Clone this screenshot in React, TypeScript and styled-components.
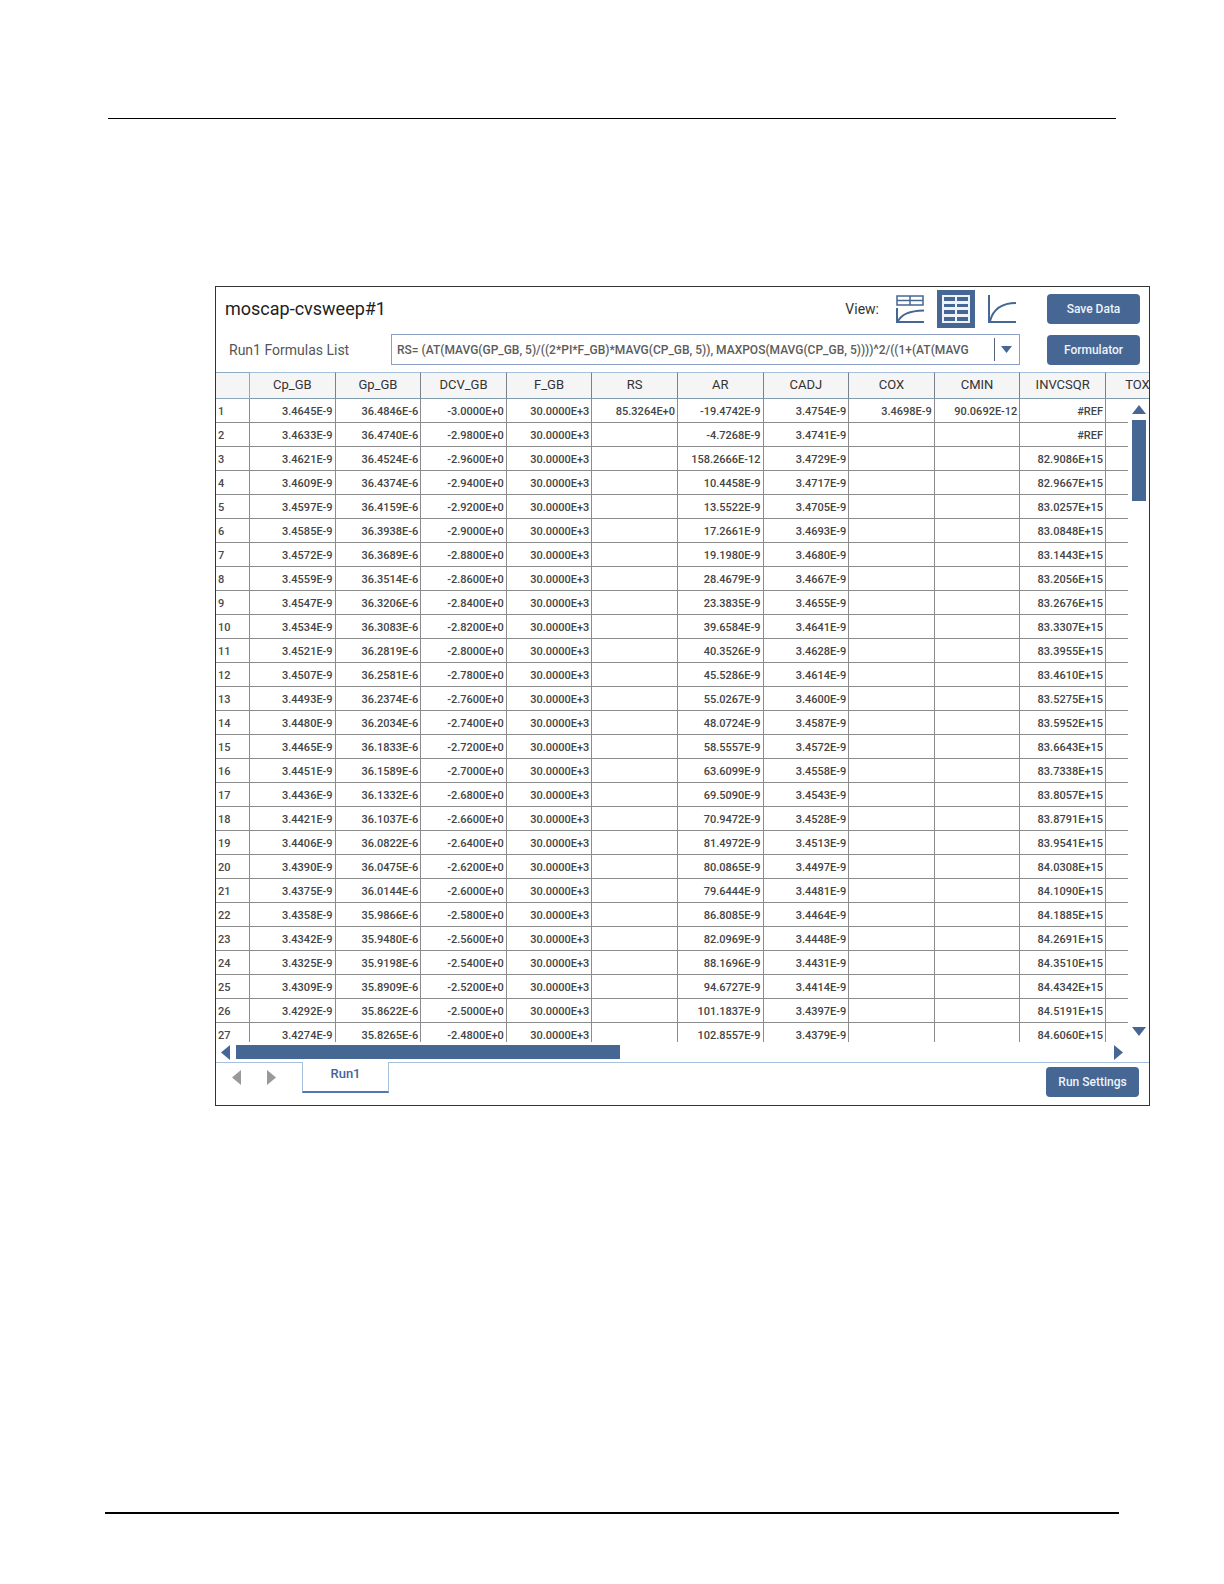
import React from "react";
import styled, { createGlobalStyle } from "styled-components";

const blue = "#466794";
const lineBlue = "#a4c0dc";

const GlobalStyle = createGlobalStyle`
  * { box-sizing: border-box; }
  body {
    margin: 0;
    background: #fff;
    color: #3a3a3a;
    font-family: Roboto, "Liberation Sans", sans-serif;
  }
  button, select { font-family: inherit; }
`;

const Page = styled.div`
  display: flex;
  flex-direction: column;
  min-height: 100vh;
  padding: 118px 105px 70px;
`;

const TopRule = styled.hr`
  width: calc(100% - 6px);
  height: 1px;
  margin: 0 auto;
  border: 0;
  background: #000;
`;

const BottomRule = styled.hr`
  width: 100%;
  height: 2px;
  margin: auto 0 0;
  border: 0;
  background: #000;
`;

const Panel = styled.main`
  margin: 167px -31px 0 110px;
  border: 1px solid #333;
  background: #fff;
`;

const Toolbar = styled.header`
  display: flex;
  align-items: center;
  height: 44px;
  padding: 0 9px;
`;

const Title = styled.h1`
  flex: 1;
  margin: 0;
  font-size: 18px;
  font-weight: 400;
  line-height: 24px;
  color: #222;
`;

const ViewLabel = styled.span`
  margin-right: 10px;
  font-size: 14px;
  line-height: 20px;
  color: #333;
`;

const ViewGroup = styled.div`
  display: flex;
  gap: 4px;
  margin-right: 24px;
`;

const ViewButton = styled.button<{ $active?: boolean }>`
  display: grid;
  place-items: center;
  width: 42px;
  height: 38px;
  padding: 0;
  border: 2px solid #fff;
  border-width: 0 2px;
  background: ${(p) => (p.$active ? blue : "#fff")};
`;

const ActionButton = styled.button`
  flex: none;
  width: 93px;
  height: 30px;
  padding: 0;
  border: 0;
  border-radius: 4px;
  background: ${blue};
  color: #eef3fa;
  font-size: 12px;
  font-weight: 500;
  line-height: 16px;
`;

const FormulaRow = styled.div`
  display: flex;
  align-items: center;
  padding: 3px 9px 7px 13px;
`;

const FormulaLabel = styled.label`
  width: 162px;
  font-size: 14px;
  line-height: 20px;
  color: #555;
`;

const SelectBox = styled.div`
  display: grid;
  flex: 1;
  align-items: center;
  margin-right: 27px;
  min-width: 0;
`;

const FormulaSelect = styled.select`
  grid-area: 1 / 1;
  width: 100%;
  height: 31px;
  padding: 0 28px 0 5px;
  appearance: none;
  border: 1px solid #8b9fc4;
  border-radius: 0;
  background: #fff;
  color: #5c5c5c;
  font-size: 12px;
  font-weight: 500;
`;

const SelectMark = styled.svg`
  grid-area: 1 / 1;
  justify-self: end;
  pointer-events: none;
`;

const Viewport = styled.div`
  position: relative;
  max-height: 670px;
  overflow: hidden;
`;

const DataTable = styled.table`
  width: calc(100% + 20px);
  table-layout: fixed;
  border-collapse: separate;
  border-spacing: 0;
`;

const CornerCell = styled.th`
  width: 34px;
  height: 27px;
  padding: 0;
  border: solid #8da9bd;
  border-width: 1px 1px 1px 0;
  background: #f5f5f5;
`;

const HeadCell = styled.th`
  height: 27px;
  padding: 0 0 2px;
  border-top: 1px solid ${lineBlue};
  border-right: 1px solid #78828c;
  border-bottom: 1px solid #7f9dad;
  background: #f5f5f5;
  color: #333;
  font-size: 13px;
  font-weight: 400;
  line-height: 16px;

  &:last-child {
    width: 63px;
    border-right: 0;
  }
`;

const RowHead = styled.th`
  height: 24px;
  padding: 2px 0 0 2px;
  border-right: 1px solid #8c8c8c;
  border-bottom: 1px solid #8c8c8c;
  color: #4a4a4a;
  font-size: 11px;
  font-weight: 500;
  line-height: 16px;
  text-align: left;
`;

const Cell = styled.td`
  height: 24px;
  padding: 2px 2px 0 0;
  border-right: 1px solid #8c8c8c;
  border-bottom: 1px solid #8c8c8c;
  color: #444;
  font-size: 11px;
  font-weight: 500;
  line-height: 16px;
  text-align: right;
  white-space: nowrap;
`;

const VerticalBar = styled.div`
  position: absolute;
  top: 27px;
  right: 0;
  bottom: 0;
  display: flex;
  flex-direction: column;
  align-items: center;
  width: 21px;
  padding: 6px 0;
  background: #fff;
`;

const VerticalThumb = styled.div`
  width: 14px;
  height: 81px;
  margin: 6px 0 auto;
  background: ${blue};
`;

const ArrowButton = styled.button`
  display: block;
  flex: none;
  padding: 0;
  border: 0;
  background: none;
  line-height: 0;
`;

const HorizontalBar = styled.div`
  display: flex;
  align-items: center;
  height: 20px;
  padding: 0 26px 0 5px;
`;

const HorizontalTrack = styled.div`
  flex: 1;
  margin: 0 6px;
`;

const HorizontalThumb = styled.div`
  width: 44%;
  height: 14px;
  background: ${blue};
`;

const Footer = styled.footer`
  display: flex;
  align-items: flex-start;
  height: 43px;
`;

const FooterLead = styled.div`
  display: flex;
  align-items: flex-start;
  gap: 26px;
  width: 86px;
  height: 100%;
  padding: 7px 0 0 16px;
  border-top: 1px solid ${lineBlue};
`;

const Tab = styled.button`
  width: 87px;
  height: 31px;
  padding: 0 0 6px;
  border: solid ${lineBlue};
  border-width: 0 1px 2px;
  border-bottom-color: #5478ae;
  background: #fff;
  color: #44649a;
  font-size: 13px;
  font-weight: 500;
  line-height: 16px;
`;

const FooterRest = styled.div`
  display: flex;
  flex: 1;
  justify-content: flex-end;
  height: 100%;
  padding: 4px 10px 0 0;
  border-top: 1px solid ${lineBlue};
`;

const columns = ["Cp_GB", "Gp_GB", "DCV_GB", "F_GB", "RS", "AR", "CADJ", "COX", "CMIN", "INVCSQR", "TOX"];

const readings = `
3.4645E-9 36.4846E-6 -3.0000E+0 -19.4742E-9 3.4754E-9 #REF
3.4633E-9 36.4740E-6 -2.9800E+0 -4.7268E-9 3.4741E-9 #REF
3.4621E-9 36.4524E-6 -2.9600E+0 158.2666E-12 3.4729E-9 82.9086E+15
3.4609E-9 36.4374E-6 -2.9400E+0 10.4458E-9 3.4717E-9 82.9667E+15
3.4597E-9 36.4159E-6 -2.9200E+0 13.5522E-9 3.4705E-9 83.0257E+15
3.4585E-9 36.3938E-6 -2.9000E+0 17.2661E-9 3.4693E-9 83.0848E+15
3.4572E-9 36.3689E-6 -2.8800E+0 19.1980E-9 3.4680E-9 83.1443E+15
3.4559E-9 36.3514E-6 -2.8600E+0 28.4679E-9 3.4667E-9 83.2056E+15
3.4547E-9 36.3206E-6 -2.8400E+0 23.3835E-9 3.4655E-9 83.2676E+15
3.4534E-9 36.3083E-6 -2.8200E+0 39.6584E-9 3.4641E-9 83.3307E+15
3.4521E-9 36.2819E-6 -2.8000E+0 40.3526E-9 3.4628E-9 83.3955E+15
3.4507E-9 36.2581E-6 -2.7800E+0 45.5286E-9 3.4614E-9 83.4610E+15
3.4493E-9 36.2374E-6 -2.7600E+0 55.0267E-9 3.4600E-9 83.5275E+15
3.4480E-9 36.2034E-6 -2.7400E+0 48.0724E-9 3.4587E-9 83.5952E+15
3.4465E-9 36.1833E-6 -2.7200E+0 58.5557E-9 3.4572E-9 83.6643E+15
3.4451E-9 36.1589E-6 -2.7000E+0 63.6099E-9 3.4558E-9 83.7338E+15
3.4436E-9 36.1332E-6 -2.6800E+0 69.5090E-9 3.4543E-9 83.8057E+15
3.4421E-9 36.1037E-6 -2.6600E+0 70.9472E-9 3.4528E-9 83.8791E+15
3.4406E-9 36.0822E-6 -2.6400E+0 81.4972E-9 3.4513E-9 83.9541E+15
3.4390E-9 36.0475E-6 -2.6200E+0 80.0865E-9 3.4497E-9 84.0308E+15
3.4375E-9 36.0144E-6 -2.6000E+0 79.6444E-9 3.4481E-9 84.1090E+15
3.4358E-9 35.9866E-6 -2.5800E+0 86.8085E-9 3.4464E-9 84.1885E+15
3.4342E-9 35.9480E-6 -2.5600E+0 82.0969E-9 3.4448E-9 84.2691E+15
3.4325E-9 35.9198E-6 -2.5400E+0 88.1696E-9 3.4431E-9 84.3510E+15
3.4309E-9 35.8909E-6 -2.5200E+0 94.6727E-9 3.4414E-9 84.4342E+15
3.4292E-9 35.8622E-6 -2.5000E+0 101.1837E-9 3.4397E-9 84.5191E+15
3.4274E-9 35.8265E-6 -2.4800E+0 102.8557E-9 3.4379E-9 84.6060E+15
`;

const rows = readings
  .trim()
  .split("\n")
  .map((line, i) => {
    const [cp, gp, dcv, ar, cadj, inv] = line.split(" ");
    const first = i === 0;
    return [
      cp,
      gp,
      dcv,
      "30.0000E+3",
      first ? "85.3264E+0" : "",
      ar,
      cadj,
      first ? "3.4698E-9" : "",
      first ? "90.0692E-12" : "",
      inv,
      "",
    ];
  });

const arrowShapes = {
  up: { w: 14, h: 9, d: "M7 0L14 9H0Z" },
  down: { w: 14, h: 9, d: "M0 0H14L7 9Z" },
  left: { w: 9, h: 15, d: "M9 0V15L0 7.5Z" },
  right: { w: 9, h: 15, d: "M0 0V15L9 7.5Z" },
};

function Arrow({ dir, label, color = blue }: { dir: keyof typeof arrowShapes; label: string; color?: string }) {
  const { w, h, d } = arrowShapes[dir];
  return (
    <ArrowButton type="button" aria-label={label}>
      <svg width={w} height={h} viewBox={`0 0 ${w} ${h}`}>
        <path d={d} fill={color} />
      </svg>
    </ArrowButton>
  );
}

function SplitIcon() {
  return (
    <svg width="28" height="28" viewBox="0 0 28 28" fill="none" stroke={blue}>
      <path d="M1 1H27V10H1ZM1 5.5H27M14 1V10" strokeWidth="1.5" />
      <path d="M1 13V27H28" strokeWidth="2" />
      <path d="M2 26C6 19 13 16 28 15.5" strokeWidth="2" />
    </svg>
  );
}

function TableIcon() {
  return (
    <svg width="28" height="28" viewBox="0 0 28 28">
      <path d="M0 0H28V28H0Z" fill="#eef3fa" />
      <path
        d="M2 2H13V6H2ZM15 2H26V6H15ZM2 9H13V12H2ZM15 9H26V12H15ZM2 15H13V19H2ZM15 15H26V19H15ZM2 22H13V26H2ZM15 22H26V26H15Z"
        fill={blue}
      />
    </svg>
  );
}

function GraphIcon() {
  return (
    <svg width="28" height="28" viewBox="0 0 28 28" fill="none" stroke={blue} strokeWidth="2">
      <path d="M1 0V27H28" />
      <path d="M2 26C5 15 13 8 28 8" />
    </svg>
  );
}

export default function App() {
  return (
    <>
      <GlobalStyle />
      <Page>
        <TopRule />
        <Panel>
          <Toolbar>
            <Title>moscap-cvsweep#1</Title>
            <ViewLabel>View:</ViewLabel>
            <ViewGroup>
              <ViewButton type="button" aria-label="Table and graph">
                <SplitIcon />
              </ViewButton>
              <ViewButton type="button" aria-label="Table" $active>
                <TableIcon />
              </ViewButton>
              <ViewButton type="button" aria-label="Graph">
                <GraphIcon />
              </ViewButton>
            </ViewGroup>
            <ActionButton type="button">Save Data</ActionButton>
          </Toolbar>
          <FormulaRow>
            <FormulaLabel htmlFor="formula">Run1 Formulas List</FormulaLabel>
            <SelectBox>
              <FormulaSelect id="formula">
                <option>RS= (AT(MAVG(GP_GB, 5)/((2*PI*F_GB)*MAVG(CP_GB, 5)), MAXPOS(MAVG(CP_GB, 5))))^2/((1+(AT(MAVG</option>
              </FormulaSelect>
              <SelectMark width="27" height="23" viewBox="0 0 27 23">
                <path d="M1.5 0V23" stroke="#56627c" />
                <path d="M8 8H19L13.5 15Z" fill={blue} />
              </SelectMark>
            </SelectBox>
            <ActionButton type="button">Formulator</ActionButton>
          </FormulaRow>
          <Viewport>
            <DataTable>
              <thead>
                <tr>
                  <CornerCell />
                  {columns.map((name) => (
                    <HeadCell key={name} scope="col">
                      {name}
                    </HeadCell>
                  ))}
                </tr>
              </thead>
              <tbody>
                {rows.map((row, i) => (
                  <tr key={i}>
                    <RowHead scope="row">{i + 1}</RowHead>
                    {row.map((value, c) => (
                      <Cell key={c}>{value}</Cell>
                    ))}
                  </tr>
                ))}
              </tbody>
            </DataTable>
            <VerticalBar>
              <Arrow dir="up" label="Scroll up" />
              <VerticalThumb />
              <Arrow dir="down" label="Scroll down" />
            </VerticalBar>
          </Viewport>
          <HorizontalBar>
            <Arrow dir="left" label="Scroll left" />
            <HorizontalTrack>
              <HorizontalThumb />
            </HorizontalTrack>
            <Arrow dir="right" label="Scroll right" />
          </HorizontalBar>
          <Footer>
            <FooterLead>
              <Arrow dir="left" label="Previous run" color="#999" />
              <Arrow dir="right" label="Next run" color="#999" />
            </FooterLead>
            <Tab type="button">Run1</Tab>
            <FooterRest>
              <ActionButton type="button">Run Settings</ActionButton>
            </FooterRest>
          </Footer>
        </Panel>
        <BottomRule />
      </Page>
    </>
  );
}
